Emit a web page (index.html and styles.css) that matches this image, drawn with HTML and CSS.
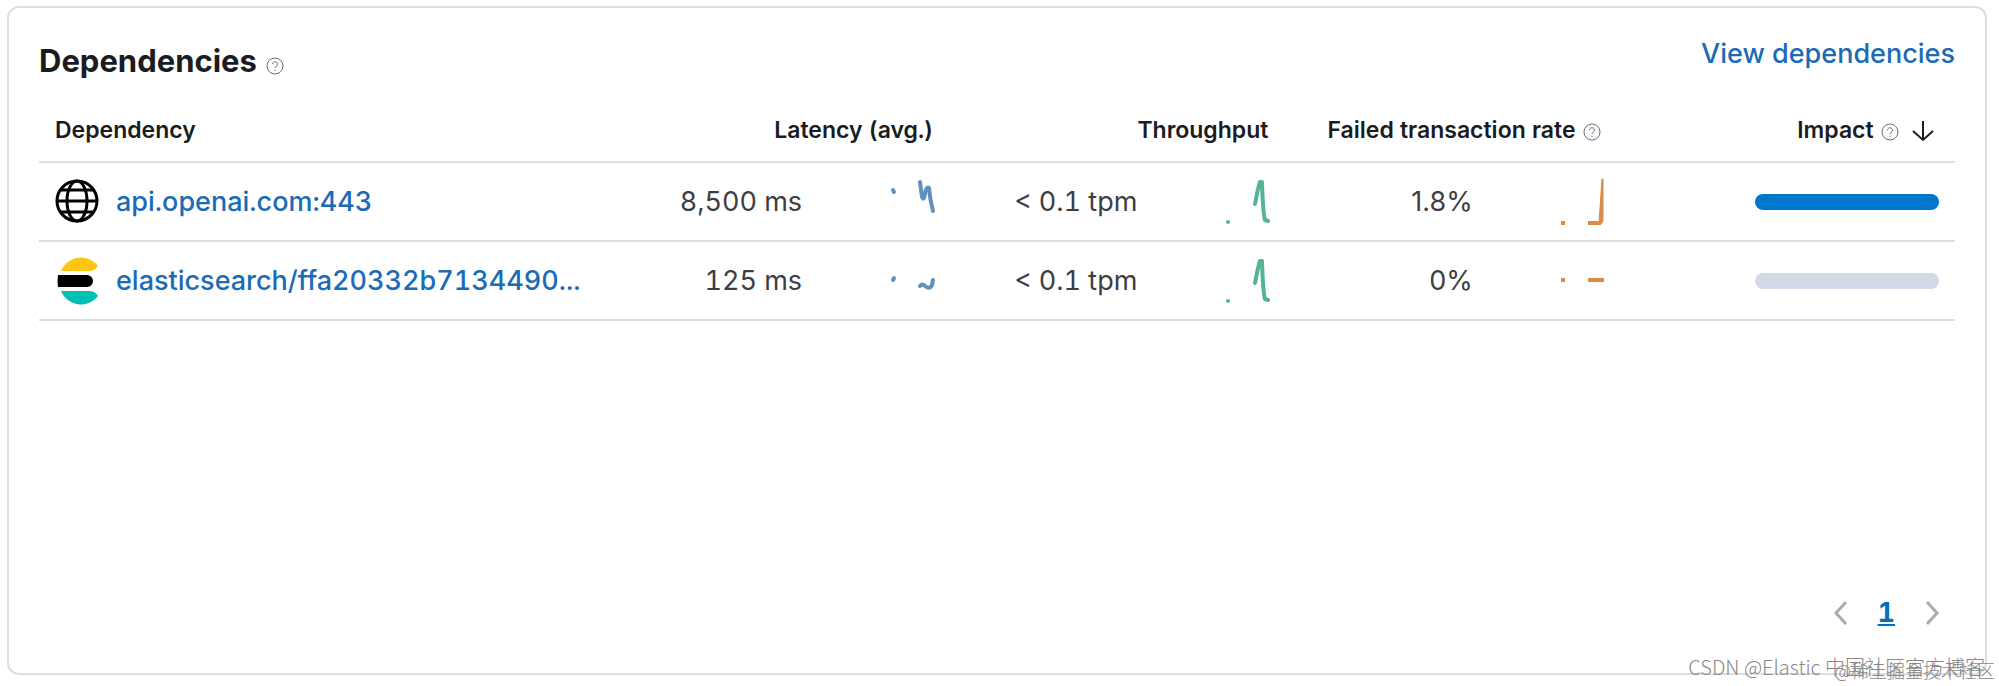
FILE: index.html
```html
<!DOCTYPE html>
<html lang="en">

<head>
    <meta charset="UTF-8">
    <meta name="viewport" content="width=device-width, initial-scale=1.0">
    <title>Dependencies</title>
    <link rel="stylesheet" href="styles.css">
</head>

<body>
    <svg class="defs" aria-hidden="true">
        <symbol id="help" viewBox="0 0 18 18">
            <circle cx="9" cy="9" r="8" />
            <path d="M6.5 7.2a2.5 2.4 0 1 1 3.8 2C9.400 9.700 9 10.100 9 11" />
            <path d="M9 12.600v1.400" />
        </symbol>
    </svg>

    <section class="panel">
        <div class="panel-header">
            <h2>Dependencies <svg class="help"><use href="#help" /></svg></h2>
            <a href="#">View dependencies</a>
        </div>

        <table class="dependencies">
            <thead>
                <tr>
                    <th class="name-column">Dependency</th>
                    <th>Latency (avg.)</th>
                    <th>Throughput</th>
                    <th>Failed transaction rate <svg class="help"><use href="#help" /></svg></th>
                    <th>
                        <button type="button" class="sort-button">
                            Impact
                            <svg class="help"><use href="#help" /></svg>
                            <svg class="sort-arrow" viewBox="0 0 22 22"><path d="M11 1v19M1 11l10 9 10-9" /></svg>
                        </button>
                    </th>
                </tr>
            </thead>
            <tbody>
                <tr>
                    <td>
                        <div class="name">
                            <svg class="icon" viewBox="0 0 46 46">
                                <g class="globe">
                                    <circle cx="22" cy="22" r="20" />
                                    <ellipse cx="22" cy="22" rx="10" ry="20" />
                                    <path d="M2 22h40M6 11h32M6 33h32" />
                                </g>
                            </svg>
                            <a href="#">api.openai.com:443</a>
                        </div>
                    </td>
                    <td>
                        <div class="metric">
                            <span>8,500 ms</span>
                            <svg class="spark blue" viewBox="0 0 120 48">
                                <path d="M80 12l1 2M107 4l2 15q2 4 3-3q1-8 4-6q1 12 4 23" />
                            </svg>
                        </div>
                    </td>
                    <td>
                        <div class="metric">
                            <span>&lt; 0.1 tpm</span>
                            <svg class="spark green" viewBox="0 0 120 48">
                                <path d="M80 44v0M107 26Q110 10 112 4h2Q115 36 117 42l3 1" />
                            </svg>
                        </div>
                    </td>
                    <td>
                        <div class="metric percent">
                            <span>1.8%</span>
                            <svg class="spark orange" viewBox="0 0 120 48">
                                <path d="M77 45h4M104 45h13" />
                                <path class="fill" d="M115 45L118 1h1V40q0 6-3 6z" />
                            </svg>
                        </div>
                    </td>
                    <td><div class="impact"><div class="impact-value" style="width: 100%"></div></div></td>
                </tr>
                <tr>
                    <td>
                        <div class="name">
                            <svg class="icon" viewBox="0 0 46 46">
                                <path fill="#fec514" d="M6 13A22 23 0 0 1 43 8Q40 13 34 13z" />
                                <path fill="#000" d="M3 17H32a6 6 0 0 1 0 12H3Q2 23 3 17z" />
                                <path fill="#00bfb3" d="M6 33A22 23 0 0 0 43 38Q40 33 34 33z" />
                            </svg>
                            <a href="#">elasticsearch/ffa20332b7134490...</a>
                        </div>
                    </td>
                    <td>
                        <div class="metric">
                            <span>125 ms</span>
                            <svg class="spark blue" viewBox="0 0 120 48">
                                <path d="M80 23l1-2M107 29q2-3 5 0q5 4 7-1l1-5" />
                            </svg>
                        </div>
                    </td>
                    <td>
                        <div class="metric">
                            <span>&lt; 0.1 tpm</span>
                            <svg class="spark green" viewBox="0 0 120 48">
                                <path d="M80 44v0M107 26Q110 10 112 4h2Q115 36 117 42l3 1" />
                            </svg>
                        </div>
                    </td>
                    <td>
                        <div class="metric percent">
                            <span>0%</span>
                            <svg class="spark orange" viewBox="0 0 120 48">
                                <path d="M77 23h4M104 23h16" />
                            </svg>
                        </div>
                    </td>
                    <td><div class="impact"><div class="impact-value" style="width: 0%"></div></div></td>
                </tr>
            </tbody>
        </table>

        <nav class="pagination" aria-label="Pagination">
            <button type="button" aria-label="Previous page" disabled>
                <svg viewBox="0 0 14 24"><path d="M12 1L2 12l10 11" /></svg>
            </button>
            <a href="#" class="current">1</a>
            <button type="button" aria-label="Next page" disabled>
                <svg viewBox="0 0 14 24"><path d="M2 1l10 11L2 23" /></svg>
            </button>
        </nav>
    </section>

    <div class="watermark source">@稀土掘金技术社区</div>
    <div class="watermark author">CSDN @Elastic 中国社区官方博客</div>
</body>

</html>
```

FILE: styles.css
```css
* {
    margin: 0;
    padding: 0;
    box-sizing: border-box;
}

body {
    display: flex;
    min-height: 100vh;
    padding: 6px 12px 11px 7px;
    background-color: #fff;
    color: #3c3e44;
    font-family: Inter, 'Liberation Sans', sans-serif;
    font-size: 27px;
    font-variant-numeric: tabular-nums;
    line-height: 32px;
}

a {
    color: #1b6bb5;
    font-weight: 500;
    text-decoration: none;
}

button {
    border: none;
    background: none;
    color: inherit;
    font: inherit;
}

svg {
    flex-shrink: 0;
    fill: none;
}

.defs {
    position: absolute;
    width: 0;
    height: 0;
}

.panel {
    display: flex;
    flex-direction: column;
    flex: 1;
    padding: 30px;
    border: 2px solid #d9dfe4;
    border-radius: 12px;
}

.panel-header {
    display: flex;
    justify-content: space-between;
    align-items: flex-start;
}

.panel-header h2 {
    margin-top: 3px;
    color: #1a1c21;
    font-size: 31px;
    line-height: 40px;
}

.help {
    width: 18px;
    height: 18px;
    margin: 0 3px 0 1px;
    stroke: #69707d;
    vertical-align: -3px;
}

.dependencies {
    width: 100%;
    margin-top: 21px;
    border-collapse: collapse;
    table-layout: fixed;
}

.dependencies th,
.dependencies td {
    padding: 0 16px;
    border-bottom: 2px solid #d9dfe4;
    text-align: right;
}

.dependencies th {
    width: 17.5%;
    height: 60px;
    padding-bottom: 4px;
    color: #1a1c21;
    font-size: 23px;
    font-weight: 600;
    white-space: nowrap;
}

.dependencies .name-column {
    width: 30%;
    text-align: left;
}

.dependencies td {
    height: 79px;
}

.sort-arrow {
    width: 22px;
    height: 22px;
    margin: 0 5px 0 4px;
    stroke: #1a1c21;
    stroke-width: 2;
    vertical-align: -4px;
}

.name {
    display: flex;
    align-items: center;
    gap: 15px;
}

.icon {
    width: 46px;
    height: 46px;
    overflow: visible;
}

.globe {
    stroke: #000;
    stroke-width: 3;
}

.metric {
    display: flex;
    justify-content: flex-end;
    align-items: center;
    gap: 11px;
}

.percent {
    font-variant-numeric: normal;
}

.spark {
    width: 120px;
    height: 48px;
    overflow: visible;
    stroke-width: 4;
    stroke-linecap: round;
    stroke-linejoin: round;
}

.blue {
    stroke: #6092c0;
}

.green {
    stroke: #54b399;
}

.orange {
    stroke: #da8b45;
    stroke-linecap: butt;
}

.orange .fill {
    fill: #da8b45;
    stroke-width: 1;
}

.impact {
    width: 184px;
    height: 16px;
    margin-left: auto;
    border-radius: 8px;
    background-color: #d3dae6;
    overflow: hidden;
}

.impact-value {
    height: 100%;
    background-color: #0077cc;
}

.pagination {
    display: flex;
    justify-content: flex-end;
    align-items: center;
    gap: 30px;
    margin-top: auto;
    padding: 0 16px 14px 0;
}

.pagination svg {
    display: block;
    width: 14px;
    height: 24px;
    stroke: #aaacb0;
    stroke-width: 3;
}

.current {
    font-weight: 700;
    color: #0071c2;
    text-decoration: underline;
}

.watermark {
    position: absolute;
    bottom: 7px;
    color: #888;
    font-family: 'Noto Sans CJK SC', sans-serif;
    font-size: 20px;
    line-height: 24px;
    font-weight: 300;
}

.author {
    right: 14px;
}

.source {
    right: 4px;
    bottom: 4px;
    font-size: 18px;
}
```
